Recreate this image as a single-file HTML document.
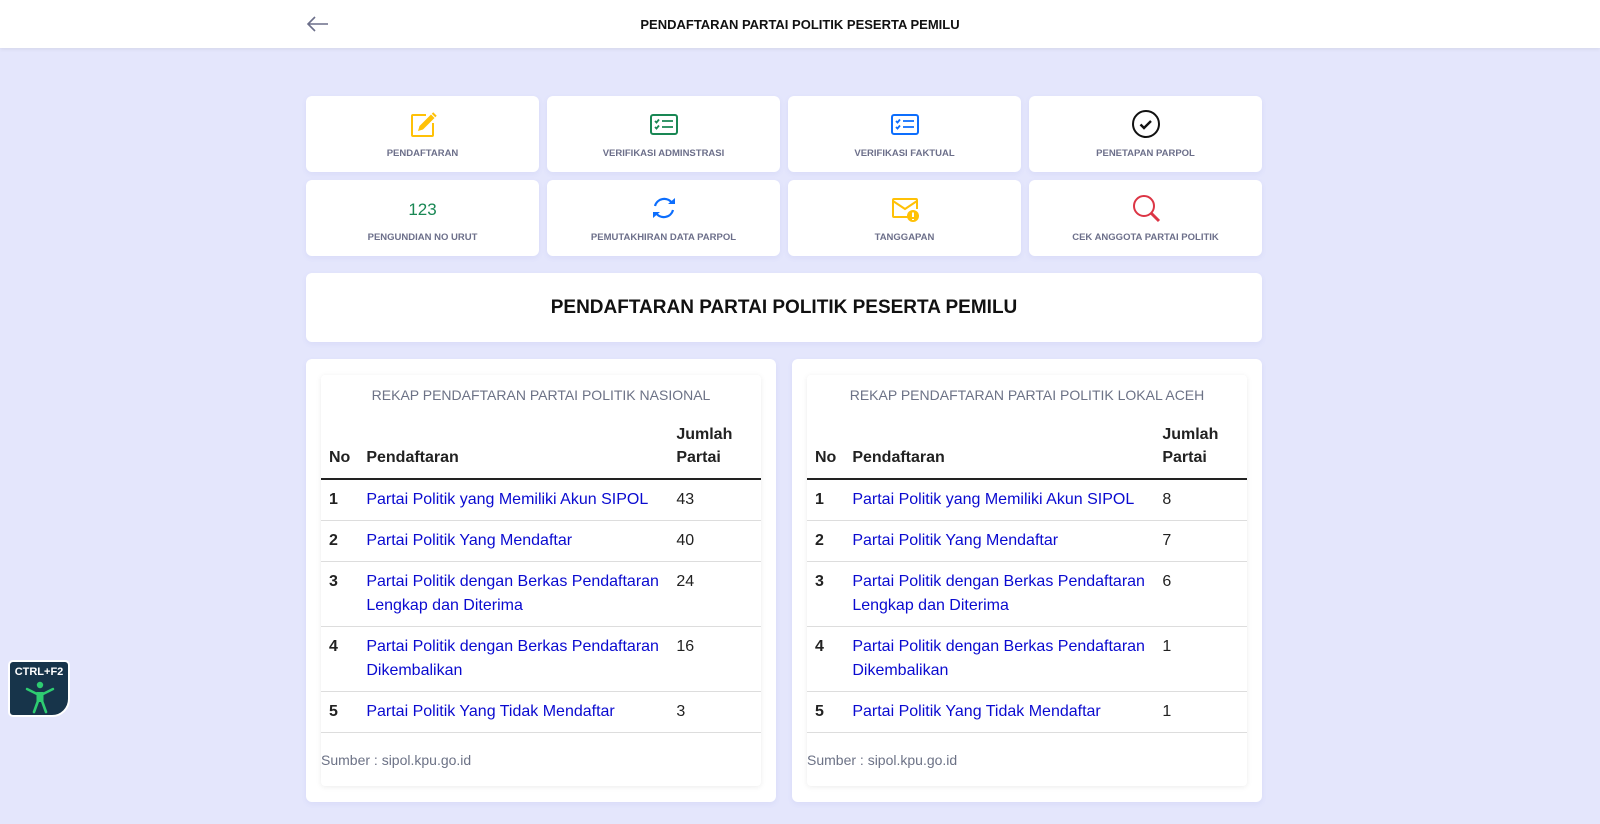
<!DOCTYPE html>
<html><head><meta charset="utf-8"><style>
*{box-sizing:border-box;margin:0;padding:0}
body{width:1600px;height:824px;overflow:hidden;background:#e4e6fc;font-family:"Liberation Sans",sans-serif;position:relative}
.hdr{position:absolute;left:0;top:0;width:1600px;height:48px;background:#fff;box-shadow:0 1px 4px rgba(0,0,0,.08)}
.hdr .t{position:absolute;left:0;width:1600px;top:17px;text-align:center;font-size:13px;font-weight:bold;color:#111}
.card{position:absolute;background:#fff;border-radius:6px;box-shadow:0 2px 6px rgba(90,100,200,.08)}
.m{width:233px;height:76px;text-align:center}
.m svg{position:absolute;left:103px;top:14px}
.m .l{position:absolute;left:0;right:0;top:52px;font-size:9.5px;font-weight:bold;color:#6c6f8a}
.title{left:306px;top:273px;width:956px;height:69px;text-align:center;font-size:19px;font-weight:bold;line-height:69px;color:#111}
.panel{top:359px;width:470px;height:443px}
.inner{position:absolute;left:15px;top:16px;width:440px;height:411px;background:#fff;box-shadow:0 1px 6px rgba(0,0,0,.08);border-radius:4px}
.cap{position:absolute;top:12px;left:0;right:0;text-align:center;font-size:14px;color:#6c7286}
table{position:absolute;top:48px;left:0;width:440px;border-collapse:collapse;font-size:16px;color:#222}
th{text-align:left;vertical-align:bottom;padding:0 8px 9px;line-height:23px;border-bottom:2px solid #222}
td{vertical-align:top;padding:8px 8px 8px;line-height:24px;border-bottom:1px solid #ddd}
td a{color:#0a0ad0;text-decoration:none}
td:first-child{font-weight:bold}
.src{position:absolute;left:0;top:377px;font-size:14px;color:#6c7286}
</style></head><body>
<div class="hdr">
<svg style="position:absolute;left:306px;top:15px" width="24" height="18" viewBox="0 0 24 18"><path d="M22 9H2M9 2L2 9l7 7" fill="none" stroke="#6c6f8a" stroke-width="1.6"/></svg>
<div class="t">PENDAFTARAN PARTAI POLITIK PESERTA PEMILU</div></div>

<div class="card m" style="left:306px;top:96px"><svg width="28" height="28" viewBox="0 0 28 28"><path d="M17 5H4a1 1 0 0 0-1 1v19a1 1 0 0 0 1 1h19a1 1 0 0 0 1-1V13" fill="none" stroke="#ffc107" stroke-width="2"/><path d="M9 21l1.5-5L22 4.5l3.5 3.5L14 19.5z" fill="#ffc107"/><path d="M23.5 3l3.5 3.5" stroke="#ffc107" stroke-width="2"/></svg><div class="l">PENDAFTARAN</div></div>
<div class="card m" style="left:547px;top:96px"><svg width="28" height="28" viewBox="0 0 28 28"><rect x="1" y="5" width="26" height="19" rx="2" fill="none" stroke="#198754" stroke-width="2"/><path d="M5 11l1.5 1.5 2.5-3M5 17l1.5 1.5 2.5-3M12 11h11M12 17h11" fill="none" stroke="#198754" stroke-width="1.8"/></svg><div class="l">VERIFIKASI ADMINSTRASI</div></div>
<div class="card m" style="left:788px;top:96px"><svg width="28" height="28" viewBox="0 0 28 28"><rect x="1" y="5" width="26" height="19" rx="2" fill="none" stroke="#0d6efd" stroke-width="2"/><path d="M5 11l1.5 1.5 2.5-3M5 17l1.5 1.5 2.5-3M12 11h11M12 17h11" fill="none" stroke="#0d6efd" stroke-width="1.8"/></svg><div class="l">VERIFIKASI FAKTUAL</div></div>
<div class="card m" style="left:1029px;top:96px"><svg width="28" height="28" viewBox="0 0 28 28"><circle cx="14" cy="14" r="13" fill="none" stroke="#111" stroke-width="2"/><path d="M8.5 14.5l3.5 3.5 7-7" fill="none" stroke="#111" stroke-width="2.4"/></svg><div class="l">PENETAPAN PARPOL</div></div>

<div class="card m" style="left:306px;top:180px"><div style="position:absolute;left:0;right:0;top:20px;font-size:17px;color:#198754">123</div><div class="l">PENGUNDIAN NO URUT</div></div>
<div class="card m" style="left:547px;top:180px"><svg width="28" height="28" viewBox="0 0 28 28"><path d="M5 12A9.5 9.5 0 0 1 22 9M23 16A9.5 9.5 0 0 1 6 19" fill="none" stroke="#0d6efd" stroke-width="2.2"/><path d="M18 10h7V4zM10 18H3v6z" fill="#0d6efd"/></svg><div class="l">PEMUTAKHIRAN DATA PARPOL</div></div>
<div class="card m" style="left:788px;top:180px"><svg width="28" height="28" viewBox="0 0 28 28"><path d="M18 23H3a1 1 0 0 1-1-1V6a1 1 0 0 1 1-1h22a1 1 0 0 1 1 1v9" fill="none" stroke="#ffc107" stroke-width="2"/><path d="M2 7l12 8 12-8" fill="none" stroke="#ffc107" stroke-width="2"/><circle cx="22" cy="22" r="6" fill="#ffc107"/><path d="M22 18.5v4.5M22 25v1" stroke="#fff" stroke-width="2"/></svg><div class="l">TANGGAPAN</div></div>
<div class="card m" style="left:1029px;top:180px"><svg width="30" height="30" viewBox="0 0 30 30"><circle cx="12" cy="12" r="10" fill="none" stroke="#dc3545" stroke-width="2"/><path d="M19 19l8 8" stroke="#dc3545" stroke-width="3"/></svg><div class="l">CEK ANGGOTA PARTAI POLITIK</div></div>

<div class="card title">PENDAFTARAN PARTAI POLITIK PESERTA PEMILU</div>

<div class="card panel" style="left:306px"><div class="inner"><div class="cap">REKAP PENDAFTARAN PARTAI POLITIK NASIONAL</div>
<table><tr><th style="width:35px">No</th><th style="width:310px">Pendaftaran</th><th>Jumlah<br>Partai</th></tr>
<tr><td>1</td><td><a>Partai Politik yang Memiliki Akun SIPOL</a></td><td>43</td></tr>
<tr><td>2</td><td><a>Partai Politik Yang Mendaftar</a></td><td>40</td></tr>
<tr><td>3</td><td><a>Partai Politik dengan Berkas Pendaftaran Lengkap dan Diterima</a></td><td>24</td></tr>
<tr><td>4</td><td><a>Partai Politik dengan Berkas Pendaftaran Dikembalikan</a></td><td>16</td></tr>
<tr><td>5</td><td><a>Partai Politik Yang Tidak Mendaftar</a></td><td>3</td></tr></table>
<div class="src">Sumber : sipol.kpu.go.id</div></div></div>

<div class="card panel" style="left:792px"><div class="inner"><div class="cap">REKAP PENDAFTARAN PARTAI POLITIK LOKAL ACEH</div>
<table><tr><th style="width:35px">No</th><th style="width:310px">Pendaftaran</th><th>Jumlah<br>Partai</th></tr>
<tr><td>1</td><td><a>Partai Politik yang Memiliki Akun SIPOL</a></td><td>8</td></tr>
<tr><td>2</td><td><a>Partai Politik Yang Mendaftar</a></td><td>7</td></tr>
<tr><td>3</td><td><a>Partai Politik dengan Berkas Pendaftaran Lengkap dan Diterima</a></td><td>6</td></tr>
<tr><td>4</td><td><a>Partai Politik dengan Berkas Pendaftaran Dikembalikan</a></td><td>1</td></tr>
<tr><td>5</td><td><a>Partai Politik Yang Tidak Mendaftar</a></td><td>1</td></tr></table>
<div class="src">Sumber : sipol.kpu.go.id</div></div></div>

<div style="position:absolute;left:8px;top:660px;width:62px;height:57px;background:#17344a;border:2px solid #fff;border-radius:5px 5px 18px 5px">
<div style="position:absolute;left:0;right:0;top:4px;text-align:center;color:#fff;font-size:11px;font-weight:bold">CTRL+F2</div>
<svg style="position:absolute;left:14px;top:18px" width="32" height="34" viewBox="0 0 32 34"><circle cx="16" cy="5" r="3.2" fill="#2ecc71"/><path d="M3 9l10 5M29 9l-10 5" stroke="#2ecc71" stroke-width="2.4" stroke-linecap="round"/><path d="M12.5 12h7v10h-7z" fill="#2ecc71"/><path d="M14 21l-4 11M18 21l4 11" stroke="#2ecc71" stroke-width="2.6" stroke-linecap="round"/></svg></div>
</body></html>
